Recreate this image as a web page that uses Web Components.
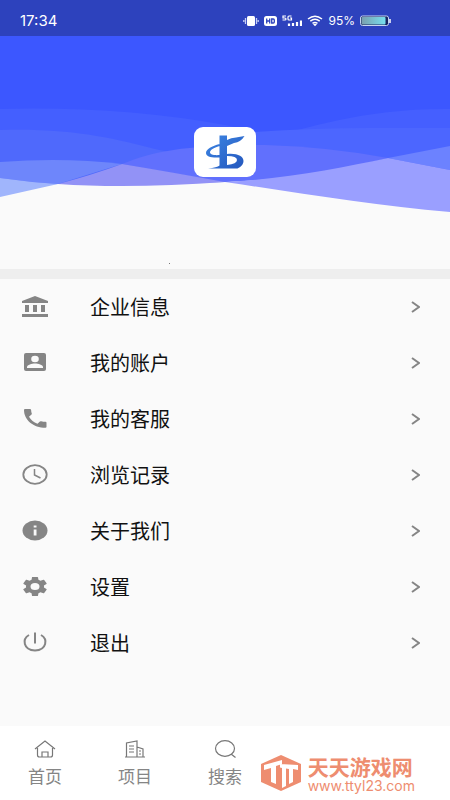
<!DOCTYPE html>
<html lang="zh-CN">
<head>
<meta charset="utf-8">
<meta name="viewport" content="width=device-width, initial-scale=1">
<title>我的</title>
<style>
html, body { height: 100%; }
body { margin: 0; background: #fafafa; font-family: "Liberation Sans", "Noto Sans CJK SC", sans-serif; }
</style>
</head>
<body>
<profile-page></profile-page>
<script>
const ICONS = {
  bank: '<path fill="#858585" stroke="none" d="M13 0 26 5V7H0V5ZM3 9h4v7H3Zm8 0h4v7h-4Zm8 0h4v7h-4ZM0 18h26v3H0Z"/>',
  account: '<path fill="#858585" stroke="none" d="M4 1h18q2 0 2 2v14q0 2-2 2H4q-2 0-2-2V3q0-2 2-2Z"/><ellipse cx="13" cy="7" rx="3.800" ry="3.200" fill="#fafafa" stroke="none"/><path fill="#fafafa" stroke="none" d="M5 16h16v-1c0-2.200-5-3.500-8-3.500s-8 1.300-8 3.500Z"/>',
  phone: '<path fill="#858585" stroke="none" d="M3 1h5q1 0 1.100 1 .1 2 .7 3.500.2.700-.3 1.100L7 8.700c2 3.300 4.700 5.500 8.500 7l2.400-2.200q.6-.5 1.300-.3 2 .6 4.300.6 1 .1 1 1v4q0 1-1 1C11.500 19.800 2 12 2 2q0-1 1-1Z"/>',
  clock: '<ellipse cx="13" cy="10.500" rx="11.700" ry="9.300" stroke-width="1.800"/><path stroke-width="1.500" d="M12.500 5v6l6 3"/>',
  info: '<ellipse cx="13" cy="10.500" rx="12.500" ry="10" fill="#858585" stroke="none"/><path fill="#fafafa" stroke="none" d="M11.700 5.500h2.800v2h-2.800Zm0 4h2.800v6h-2.800Z"/>',
  gear: '<path transform="translate(-2 -1.500) scale(1.250 1)" fill="#858585" stroke="none" d="M19.140 12.940c.04-.3.060-.61.060-.94s-.02-.64-.07-.94l2.030-1.580a.49.49 0 0 0 .12-.61l-1.920-3.320a.488.488 0 0 0-.59-.22l-2.390.96c-.5-.38-1.030-.7-1.620-.94l-.36-2.540a.484.484 0 0 0-.48-.41h-3.840c-.24 0-.43.17-.47.410l-.36 2.540c-.59.240-1.130.570-1.620.940l-2.390-.96c-.22-.08-.47 0-.59.220L2.740 8.870c-.12.210-.08.470.12.610l2.030 1.580c-.05.300-.09.630-.09.940s.02.640.070.940l-2.030 1.580a.49.49 0 0 0-.12.610l1.920 3.320c.12.220.37.290.590.220l2.390-.96c.5.380 1.030.700 1.620.940l.36 2.540c.05.240.24.410.480.410h3.840c.24 0 .44-.17.470-.41l.36-2.540c.59-.24 1.130-.56 1.620-.94l2.390.96c.22.080.47 0 .59-.22l1.920-3.320a.48.480 0 0 0-.12-.61l-2.010-1.580zM12 15.600a3.600 3.600 0 1 1 0-7.200a3.600 3.600 0 0 1 0 7.200z"/>',
  power: '<path stroke-width="2" d="M13 .5v11M7 3C0 7 1 18 13 18.600C25 18 26 7 19 3"/>'
};

class BaseElement extends HTMLElement {
  constructor() {
    super();
    this.attachShadow({ mode: 'open' });
  }
  connectedCallback() { this.shadowRoot.innerHTML = this.render(); }
}

class StatusBar extends BaseElement {
  render() {
    return `<style>
      :host { display: flex; align-items: center; justify-content: space-between; height: 36px; padding: 5px 59px 0 20px; box-sizing: border-box; background: #2d42bd; color: #fff; font: 14px/18px "Inter", sans-serif; }
      div { display: flex; align-items: center; gap: 5px; }
      time { font-size: 15px; }
      .pct { font-size: 12px; }
      svg { display: block; }
    </style>
    <time>17:34</time>
    <div>
      <svg width="16" height="12" viewBox="0 0 16 12"><rect x="4" y="1" width="8" height="10" rx="1.500" fill="#fff"/><path d="M2.500 3v6M13.500 3v6M.8 5v2M15.200 5v2" stroke="#c4cdf5" stroke-width="1.300"/></svg>
      <svg width="13" height="12" viewBox="0 0 13 12"><rect y="1" width="13" height="10" rx="2.500" fill="#fff"/><path d="M2.700 3.500v5M5.700 3.500v5M2.700 6h3M7.700 4v4h1.600q1 0 1-1V5q0-1-1-1Z" fill="none" stroke="#2d42bd" stroke-width="1.300"/></svg>
      <svg width="20" height="12" viewBox="0 0 20 12"><path d="M4 1H1v2h2q1 0 1 1t-1 1H.5M9.500 1H7Q6 1 6 2v2q0 1 1 1h2.500V3H8" fill="none" stroke="#fff" stroke-width="1.200"/><path d="M7 11V8.500M11 11V8M15 11V7M19 11V5.500" stroke="#fff" stroke-width="2.200"/></svg>
      <svg width="16" height="12" viewBox="0 0 16 12"><g fill="none" stroke="#fff" stroke-width="1.500"><path d="M1 4Q8-1.500 15 4M3.300 6.200Q8 2.500 12.700 6.200M5.500 8.300Q8 6.500 10.500 8.300"/></g><path d="M6 9.300Q8 8 10 9.300L8 11.200Z" fill="#fff"/></svg>
      <span class="pct">95%</span>
      <svg width="31" height="12" viewBox="0 0 31 12"><defs><linearGradient id="b"><stop stop-color="#7a9fae"/><stop offset="1" stop-color="#76dfee"/></linearGradient></defs><rect x=".5" y="1" width="28" height="9.500" rx="2" fill="#182660" stroke="#c6d4f2"/><rect x="1.500" y="2" width="24" height="7.500" rx="1" fill="url(#b)"/><path d="M30 4v4" stroke="#fff" stroke-width="1.500"/></svg>
    </div>`;
  }
}

class ProfileHero extends BaseElement {
  render() {
    return `<style>
      :host { display: grid; grid-template-rows: 233px; background: #fafafa; }
      .waves { grid-area: 1 / 1; width: 100%; height: 233px; display: block; }
      .logo { grid-area: 1 / 1; justify-self: center; margin-top: 91px; width: 62px; height: 50px; }
      .dot { grid-area: 1 / 1; justify-self: center; align-self: end; width: 1px; height: 1px; margin: 0 112px 5px 0; background: #777; }
    </style>
    <svg class="waves" viewBox="0 36 450 233" preserveAspectRatio="none" aria-hidden="true">
      <path fill="#3c57ff" d="M0 36H450V170H0Z"/>
      <path fill="#445fff" d="M0 109Q120 106 225 125C290 139 340 148 388 158L225 182L58 184L0 185Z"/>
      <path fill="#455fff" d="M190 149C280 145 330 108 450 109V170L388 158L225 170Z"/>
      <path fill="#4c66ff" d="M225 134Q300 128 370 128H450V170L388 158L225 175Z"/>
      <path fill="#4f69fc" d="M0 130C75 128 115 139 155 149C185 156 205 157 260 165L225 182L58 184L0 185Z"/>
      <path fill="#6170fd" d="M122 164C155 151 185 145 265 145Q330 147 388 158C335 171 285 180 225 182Q165 172 122 164Z"/>
      <path fill="#6e86fb" d="M0 162Q65 157 122 164L58 184Q28 182 0 178Z"/>
      <path fill="#a0b5fc" d="M0 178Q28 182 58 184L0 197Z"/>
      <path fill="#9292f6" d="M58 184Q92 175 122 164Q170 172 225 182Q130 189 58 184Z"/>
      <path fill="#6c82ff" d="M388 158L450 146V170Z"/>
      <path fill="#9a9fff" d="M225 182C285 179 340 168 388 158L450 170V212C375 206 300 193 225 182Z"/>
    </svg>
    <svg class="logo" viewBox="0 0 62 50" role="img" aria-label="书">
      <defs><linearGradient id="g" x2="1" y2="1"><stop stop-color="#3d86e4"/><stop offset="1" stop-color="#2457bd"/></linearGradient></defs>
      <rect width="62" height="50" rx="9" fill="#fff"/>
      <path fill="url(#g)" d="M25.500 8.500H33V13Q37 10.500 42 10.500L50.500 9Q47 15 40 16L33 19V27c10-1 16.500 2 16.500 7q0 5-6 7.500H14q9-1 11.500-3V30.500C17 31 12 29.500 12 26c0-4 6-7 13.500-9v2c-6 2-9.500 4-9.500 6.500 0 2 4 3 9.500 2.500ZM33 29v9q10-1 10-5 0-4-10-4Z"/>
    </svg>
    <span class="dot"></span>`;
  }
}

class MenuItem extends BaseElement {
  render() {
    return `<style>
      :host { display: block; }
      button { display: flex; align-items: center; width: 100%; height: 56px; padding: 0 30px 1px 22px; border: 0; background: none; color: #111; font: 20px/24px "Noto Sans CJK SC", sans-serif; text-align: left; cursor: pointer; }
      svg { display: block; flex: none; fill: none; stroke: #858585; }
      span { flex: 1; margin-left: 42px; }
    </style>
    <button type="button"><svg width="26" height="21" viewBox="0 0 26 21" aria-hidden="true">${ICONS[this.getAttribute('icon')]}</svg>
      <span><slot></slot></span>
      <svg width="9" height="12" viewBox="0 0 9 12" aria-hidden="true"><path d="m1 1 7 5-7 5" stroke-width="2"/></svg>
    </button>`;
  }
}

class NavItem extends BaseElement {
  render() {
    const art = {
      home: '<path d="M1 9 11 1l10 8M3.500 8v7q0 2 2 2h11q2 0 2-2V8M8 17v-5h6v5"/>',
      project: '<path d="M1 17h20M2.500 17V3L13 1v16M13 7l6 2v8M5 6h5M5 9h5M5 12h5M15 11h2M15 14h2"/>',
      search: '<ellipse cx="11" cy="8.500" rx="9.500" ry="7.800"/><path d="m17 14 4.500 3.500"/>'
    };
    return `<style>
      :host { display: block; }
      a { display: flex; flex-direction: column; align-items: center; gap: 7px; padding-top: 14px; color: #858585; font: 17px/22px "Noto Sans CJK SC", sans-serif; text-decoration: none; }
      svg { fill: none; stroke: #777; stroke-width: 1.200; }
    </style><a href="#${this.getAttribute('icon')}"><svg width="22" height="18" viewBox="0 0 22 18" aria-hidden="true">${art[this.getAttribute('icon')]}</svg><slot></slot></a>`;
  }
}

class SiteBrand extends BaseElement {
  render() {
    return `<style>
      :host { display: flex; align-items: center; gap: 7px; color: #ee8d70; }
      svg { flex: none; }
      div { display: flex; flex-direction: column; white-space: nowrap; }
      b { font: 700 21px/26px "Noto Sans CJK SC", sans-serif; }
      span { font: 14px/14px "Inter", sans-serif; }
    </style>
    <svg width="40" height="36" viewBox="0 0 40 36" aria-hidden="true"><path fill="#ee8d70" d="M20 0 40 9v18L20 36 0 27V9Z"/><path fill="#fff" d="M3 10 21 5v4l-6 2v18l-5-2V13l-7 2ZM19 9l18 1v5l-5-1v13l-4 2V14l-3-.5V31l-4 2V13l-2-.5Z"/></svg>
    <div><b>天天游戏网</b><span>www.ttyl23.com</span></div>`;
  }
}

class ProfilePage extends BaseElement {
  render() {
    return `<style>
      :host { display: flex; flex-direction: column; min-height: 100vh; }
      main { flex: 1; }
      .menu { border-top: 10px solid #eee; }
      nav { display: grid; grid-template-columns: repeat(5, 1fr); height: 74px; background: #fff; }
      site-brand { grid-column: span 2; justify-self: end; align-self: end; margin: 0 35px 7px 0; }
    </style>
    <status-bar></status-bar>
    <main>
      <profile-hero></profile-hero>
      <div class="menu">
        <menu-item icon="bank">企业信息</menu-item>
        <menu-item icon="account">我的账户</menu-item>
        <menu-item icon="phone">我的客服</menu-item>
        <menu-item icon="clock">浏览记录</menu-item>
        <menu-item icon="info">关于我们</menu-item>
        <menu-item icon="gear">设置</menu-item>
        <menu-item icon="power">退出</menu-item>
      </div>
    </main>
    <nav>
      <nav-item icon="home">首页</nav-item>
      <nav-item icon="project">项目</nav-item>
      <nav-item icon="search">搜索</nav-item>
      <site-brand></site-brand>
    </nav>`;
  }
}

customElements.define('status-bar', StatusBar);
customElements.define('profile-hero', ProfileHero);
customElements.define('menu-item', MenuItem);
customElements.define('nav-item', NavItem);
customElements.define('site-brand', SiteBrand);
customElements.define('profile-page', ProfilePage);
</script>
</body>
</html>
